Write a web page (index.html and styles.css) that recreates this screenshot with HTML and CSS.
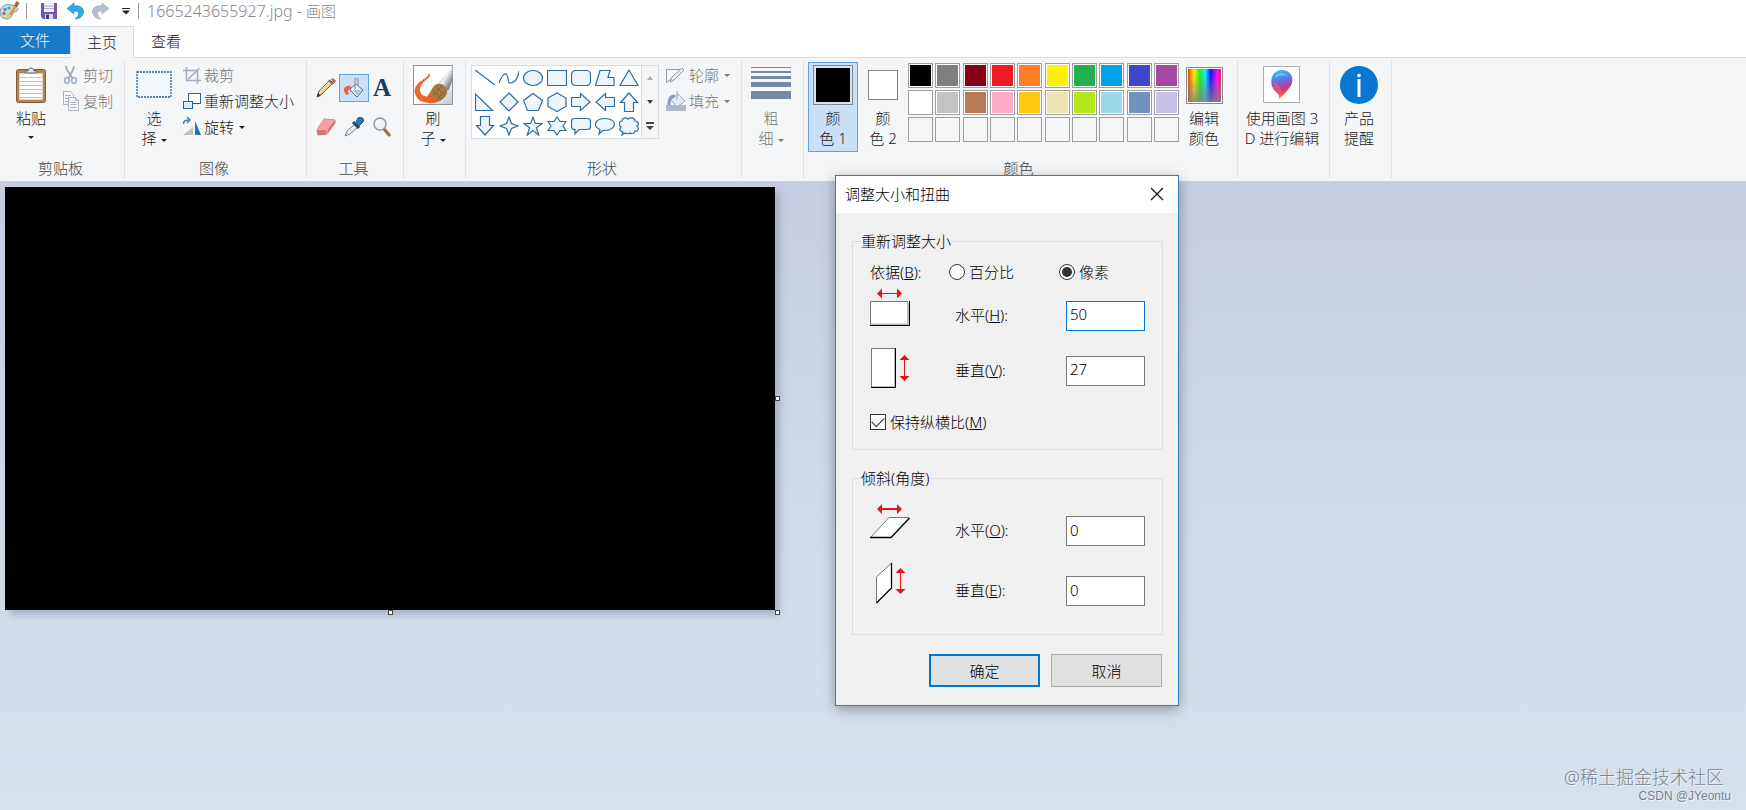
FILE: index.html
```html
<!DOCTYPE html>
<html lang="zh-CN">
<head>
<meta charset="utf-8">
<title>1665243655927.jpg - 画图</title>
<link rel="stylesheet" href="styles.css">
</head>
<body>
<header class="titlebar">
  <svg class="app-icon" width="20" height="20" viewBox="0 0 20 20"><path d="M0 12C0 6 5 2 11 4c6 1 8 4 6 6-1 1-3 0-4 2-1 3-2 6-6 6-4 0-7-3-7-6z" fill="#c6dbe2" stroke="#7896a3"/><circle cx="5" cy="8.500" r="1.700" fill="#3f9be0"/><circle cx="9" cy="7" r="1.600" fill="#58b25c"/><circle cx="4" cy="12.500" r="1.700" fill="#e0574a"/><circle cx="8" cy="15" r="1.600" fill="#eec23a"/><path d="M10 14L17 3" stroke="#e09a3c" stroke-width="2.600"/><path d="M15.500 5.500L18 1" stroke="#a8672a" stroke-width="3.600"/></svg>
  <span class="divider"></span>
  <button class="quick" aria-label="保存"><svg width="18" height="18" viewBox="0 0 18 18"><path d="M1 1h16v16H3l-2-2z" fill="#7657ab"/><path d="M4 1h10v9H4z" fill="#eef1f6"/><path d="M4 4h10M4 6.500h10" stroke="#aab6c8"/><path d="M5 12h8v5H5z" fill="#d9d5ea"/><path d="M6 12.500h3V17H6z" fill="#4c3a80"/></svg></button>
  <button class="quick" aria-label="撤消"><svg width="18" height="18" viewBox="0 0 18 18"><path d="M1 6.500L8 1v3c8-1 11 4 9 8-1 3-4 5-8 5 4-3 6-8-1-8v3z" fill="#36a6e4" stroke="#2490d0" stroke-width=".7"/></svg></button>
  <button class="quick" aria-label="重做"><svg width="18" height="18" viewBox="0 0 18 18"><path d="M17 6.500L10 1v3C2 3-1 8 1 12c1 3 4 5 8 5-4-3-6-8 1-8v3z" fill="#b4bfcd" stroke="#a3afbf" stroke-width=".7"/></svg></button>
  <button class="quick quick-more" aria-label="自定义快速访问工具栏"><svg width="8" height="8" viewBox="0 0 8 8"><path d="M0 1.500h8" stroke="#222" /><path d="M0 3.500h8L4 7.500z" fill="#222"/></svg></button>
  <span class="divider"></span>
  <h1 class="doc-title">1665243655927.jpg - <span class="app-name">画图</span></h1>
</header>

<nav class="tabs">
  <button class="tab tab-file">文件</button>
  <button class="tab tab-active">主页</button>
  <button class="tab">查看</button>
</nav>

<section class="ribbon">
  <div class="group">
    <div class="group-body">
      <button class="big wide-paste"><span class="big-icon"><svg width="32" height="38" viewBox="0 0 32 38"><rect x="1.500" y="3.500" width="29" height="33" rx="2" fill="#b78850" stroke="#7d5a34"/><path d="M4 7h24v27H4z" fill="#fff" stroke="#96754e" stroke-width=".6"/><path d="M5 11.500h22M5 15.500h22M5 19.500h22M5 23.500h22M5 27.500h22M5 31.500h22" stroke="#b9c6d4"/><path d="M10 7V5h3c0-4 6-4 6 0h3v2z" fill="#dfe5e8" stroke="#5e6870"/></svg></span><span>粘贴</span><span class="caret"></span></button>
      <div class="stack">
        <button class="small" disabled><svg width="18" height="20" viewBox="0 0 18 20"><path d="M4 1l1 4 6 9M12 1l-1 4-5 9" fill="none" stroke="#a2a9b5" stroke-width="1.800"/><ellipse cx="5" cy="15.500" rx="2.300" ry="2.800" fill="none" stroke="#a5b3cb" stroke-width="1.800"/><ellipse cx="12" cy="15.500" rx="2.300" ry="2.800" fill="none" stroke="#a5b3cb" stroke-width="1.800"/></svg>剪切</button>
        <button class="small" disabled><svg width="18" height="20" viewBox="0 0 18 20"><path d="M1.500.5h7l3 3v10h-10z" fill="#f5f7fb" stroke="#a7b3c9"/><path d="M3 4.500h6M3 7.500h6M3 10.500h6" stroke="#a7b3c9"/><path d="M6.500 6.500h7l3 3v10h-10z" fill="#f5f7fb" stroke="#a7b3c9"/><path d="M13.500 6.500v3h3M8.500 11.500h6M8.500 13.500h6M8.500 16.500h6" fill="none" stroke="#a7b3c9"/></svg>复制</button>
      </div>
    </div>
    <h2 class="group-label">剪贴板</h2>
  </div>

  <div class="group">
    <div class="group-body">
      <button class="big"><span class="big-icon"><svg width="36" height="28" viewBox="0 0 36 28"><rect x="1" y="1" width="34" height="25" fill="#f3f8fc" stroke="#265f94" stroke-width="1.300" stroke-dasharray="2 1"/></svg></span><span>选<br>择<span class="caret"></span></span></button>
      <div class="stack stack-image">
        <button class="small" disabled><svg width="18" height="18" viewBox="0 0 18 18"><path d="M3.500 1v13.500H18M0 4.500h14.500V18M5 13.500L16.500 2" fill="none" stroke="#a3adc2" stroke-width="1.500"/></svg>裁剪</button>
        <button class="small"><svg width="18" height="18" viewBox="0 0 18 18"><rect x="5.500" y="1.500" width="12" height="10" fill="#fff" stroke="#22659c"/><rect x=".5" y="9.500" width="9" height="7" fill="#d7edf8" stroke="#22659c"/></svg>重新调整大小</button>
        <button class="small"><svg width="18" height="20" viewBox="0 0 18 20"><path d="M0 18h10V10z" fill="#bdc0c3"/><path d="M12 4v14h6z" fill="#2373b3"/><path d="M.5 7c0-2 1-4 5-4M4 0l3 3-3 3" fill="none" stroke="#2f7fc8" stroke-width="1.500"/></svg>旋转<span class="caret"></span></button>
      </div>
    </div>
    <h2 class="group-label">图像</h2>
  </div>

  <div class="group">
    <div class="group-body tools">
      <button class="tool" aria-label="铅笔"><svg width="20" height="20" viewBox="0 0 20 20"><path d="M1 19l2-6L14 2l3 3L6 16z" fill="#f6d27b" stroke="#7c5f33"/><path d="M4 13L14 3" stroke="#fff2bb"/><path d="M15 1l2-1 3 3-2 3z" fill="#c95f54"/><path d="M13 2l4 4" stroke="#557a68" stroke-width="1.800"/><path d="M1 19l1-4 3 3z" fill="#333"/></svg></button>
      <button class="tool tool-selected" aria-label="用颜色填充"><svg width="20" height="20" viewBox="0 0 20 20"><path d="M7 10l5-4 7 6-6 7-7-7z" fill="#e9f3f9" stroke="#50697d"/><path d="M9 12l9-.500-5 6z" fill="#a5c8e2"/><path d="M11 11V2c0-3 3-3 3 0v6" fill="none" stroke="#96938a" stroke-width="1.200"/><path d="M7 8C2 7-1 10 0 13l2 4 3-1c-2-3-1-4 1-5z" fill="#ed6535"/></svg></button>
      <button class="tool letter" aria-label="文本">A</button>
      <button class="tool" aria-label="橡皮擦"><svg width="20" height="20" viewBox="0 0 20 20"><path d="M1 13L8 2l11 1v3l-8 11-9 1z" fill="#dd7377" stroke="#c6777a"/><path d="M1 13L8 2l11 1-8 10z" fill="#f3a2a1"/><path d="M11 12v5" stroke="#f4b6b3"/></svg></button>
      <button class="tool" aria-label="颜色选取器"><svg width="20" height="20" viewBox="0 0 20 20"><path d="M1 19l2-5 8-7 3 3-8 7z" fill="#e6edf2" stroke="#718493"/><path d="M9 5l6 6" stroke="#25435d" stroke-width="3"/><path d="M12 5l2-4c3-2 7 1 5 4l-4 4z" fill="#2c79b8" stroke="#1b4d7b"/></svg></button>
      <button class="tool" aria-label="放大镜"><svg width="20" height="20" viewBox="0 0 20 20"><path d="M12 12l6 7" stroke="#9f6d3c" stroke-width="3"/><circle cx="8" cy="7" r="6" fill="#edf5f9" stroke="#90999e" stroke-width="1.500"/><path d="M5 7c0-2 1-3 3-3" fill="none" stroke="#fff" stroke-width="1.500"/></svg></button>
    </div>
    <h2 class="group-label">工具</h2>
  </div>

  <div class="group">
    <div class="group-body">
      <button class="big"><span class="big-icon"><svg width="40" height="40" viewBox="0 0 40 40"><defs><linearGradient id="paper" x1="0" y1="0" x2="1" y2="1"><stop offset=".5" stop-color="#fff"/><stop offset="1" stop-color="#c4c8cb"/></linearGradient><linearGradient id="ferrule" x1="0" y1="0" x2="1" y2="1"><stop offset="0" stop-color="#70767e"/><stop offset=".45" stop-color="#f2f4f6"/><stop offset="1" stop-color="#30343f"/></linearGradient></defs><rect x=".5" y=".5" width="39" height="39" fill="url(#paper)" stroke="#8f9496"/><path d="M16 8c-1 4-4 5-8 8-6 4-8 10-5 15 3 6 9 7 15 6l3-6c-7 2-14 0-14-6 0-4 3-8 7-11 3-2 4-4 2-6z" fill="#ee6730"/><path d="M10 36c4-2 5-7 9-11l9 10c-5 4-13 4-18 1z" fill="#e9612a"/><path d="M18 26c2-6 7-9 11-7 4 1 6 6 5 10-3 5-7 8-10 7-4-2-6-6-6-10z" fill="#a47b43"/><path d="M20 25l9 9M23 22l9 9M20 30l9-9M24 34l9-9" stroke="#7a5730" stroke-width=".8"/><path d="M26 18L38 2h1.500v13L35 26c-2-4-5-7-9-8z" fill="url(#ferrule)"/></svg></span><span>刷<br>子<span class="caret"></span></span></button>
    </div>
  </div>

  <div class="group">
    <div class="group-body">
      <div class="gallery">
        <div class="shapes">
          <button class="shape" aria-label="直线"><svg viewBox="0 0 20 20"><path d="M0 2l20 15"/></svg></button>
          <button class="shape" aria-label="曲线"><svg viewBox="0 0 20 20"><path d="M0 15C3 7 6 4 8 7s0 9 4 8 7-5 8-12"/></svg></button>
          <button class="shape" aria-label="椭圆形"><svg viewBox="0 0 20 20"><ellipse cx="10" cy="10" rx="9.500" ry="7.500"/></svg></button>
          <button class="shape" aria-label="矩形"><svg viewBox="0 0 20 20"><path d="M.5 2.500h19v15H.5z"/></svg></button>
          <button class="shape" aria-label="圆角矩形"><svg viewBox="0 0 20 20"><rect x=".5" y="2.500" width="19" height="15" rx="4"/></svg></button>
          <button class="shape" aria-label="多边形"><svg viewBox="0 0 20 20"><path d="M5 2.500h10l-2 7h6v8H.5z"/></svg></button>
          <button class="shape" aria-label="三角形"><svg viewBox="0 0 20 20"><path d="M10 2l9 15.500H1z"/></svg></button>
          <button class="shape" aria-label="直角三角形"><svg viewBox="0 0 20 20"><path d="M.5 2v16.500h17z"/></svg></button>
          <button class="shape" aria-label="菱形"><svg viewBox="0 0 20 20"><path d="M10 1l9 9-9 9-9-9z"/></svg></button>
          <button class="shape" aria-label="五边形"><svg viewBox="0 0 20 20"><path d="M10 1.500l9.500 7-4 10h-11l-4-10z"/></svg></button>
          <button class="shape" aria-label="六边形"><svg viewBox="0 0 20 20"><path d="M10 1l9 5v8.500l-9 5-9-5V6z"/></svg></button>
          <button class="shape" aria-label="右箭头"><svg viewBox="0 0 20 20"><path d="M.5 5.500h9v-4L19 10l-9.500 8.500v-4h-9z"/></svg></button>
          <button class="shape" aria-label="左箭头"><svg viewBox="0 0 20 20"><path d="M19.500 5.500h-9v-4L1 10l9.500 8.500v-4h9z"/></svg></button>
          <button class="shape" aria-label="上箭头"><svg viewBox="0 0 20 20"><path d="M5.500 19.500v-9h-4L10 1l8.500 9.500h-4v9z"/></svg></button>
          <button class="shape" aria-label="下箭头"><svg viewBox="0 0 20 20"><path d="M5.500.5v9h-4L10 19l8.500-9.500h-4v-9z"/></svg></button>
          <button class="shape" aria-label="四角星形"><svg viewBox="0 0 20 20"><path d="M10 1l2.500 6.500L19 10l-6.500 2.500L10 19l-2.500-6.500L1 10l6.500-2.500z"/></svg></button>
          <button class="shape" aria-label="五角星形"><svg viewBox="0 0 20 20"><path d="M10 1l2.300 6.500H19l-5.500 4.300 2.200 7.200L10 14.500 4.300 19l2.200-7.200L1 7.500h6.700z"/></svg></button>
          <button class="shape" aria-label="六角星形"><svg viewBox="0 0 20 20"><path d="M10 1l3 4.500h6L16 10l3 4.500h-6L10 19l-3-4.500H1L4 10 1 5.500h6z"/></svg></button>
          <button class="shape" aria-label="圆角矩形标注"><svg viewBox="0 0 20 20"><path d="M3.500 2.500h13q3 0 3 3v5q0 3-3 3H8L4 18v-4.500q-3.500 0-3.500-3v-5q0-3 3-3z"/></svg></button>
          <button class="shape" aria-label="椭圆形标注"><svg viewBox="0 0 20 20"><path d="M5 13.500C-3 10 0 2.500 10 2.500c13 0 12 12 0 12H8L4 18z"/></svg></button>
          <button class="shape" aria-label="云形标注"><svg viewBox="0 0 20 20"><path d="M3 5c0-3 4-4 6-2 3-2 7-1 7 2 4 0 4 4 2 5 3 3 0 6-2 5 0 3-4 3-5 2-1 1-4 1-5 0l-3 2 1-3c-3 0-4-3-2-5-3-2-2-6 1-6z"/></svg></button>
        </div>
        <div class="gallery-scroll">
          <button aria-label="向上滚动"><svg width="8" height="6" viewBox="0 0 8 6"><path d="M1 5l3-4 3 4z" fill="#aaa"/></svg></button>
          <button aria-label="向下滚动"><svg width="8" height="6" viewBox="0 0 8 6"><path d="M1 1h6L4 5z" fill="#444"/></svg></button>
          <button aria-label="更多形状"><svg width="8" height="9" viewBox="0 0 8 9"><path d="M0 1h8" stroke="#444" stroke-width="2"/><path d="M0 4h8L4 8z" fill="#444"/></svg></button>
        </div>
      </div>
      <div class="stack stack-style">
        <button class="small" disabled><svg width="20" height="18" viewBox="0 0 20 18"><path d="M14 3.500H.5v13L12 8" fill="none" stroke="#8e99b8"/><path d="M4 16l2-5L16 2l2 2L8 14z" fill="#e8eef7" stroke="#8e99b8"/></svg>轮廓<span class="caret"></span></button>
        <button class="small" disabled><svg width="20" height="20" viewBox="0 0 20 20"><path d="M0 14h20v6H0z" fill="#aeb8ca"/><path d="M3 14c0-6 1-9 6-9" fill="none" stroke="#8e9bb5" stroke-width="3"/><path d="M5 9l7-6 7 7-8 6z" fill="#e2ebf4" stroke="#9ba8bf"/><path d="M11 9V0" stroke="#9ba8bf"/></svg>填充<span class="caret"></span></button>
      </div>
    </div>
    <h2 class="group-label">形状</h2>
  </div>

  <div class="group">
    <div class="group-body">
      <button class="big" disabled><span class="big-icon"><svg width="40" height="36" viewBox="0 0 40 36"><path d="M0 0h40v1H0zM0 4h40v2H0zM0 9h40v3H0zM0 15h40v5H0zM0 24h40v8H0z" fill="#7588a5"/></svg></span><span>粗<br>细<span class="caret"></span></span></button>
    </div>
  </div>

  <div class="group group-colors">
    <div class="group-body">
      <button class="big big-selected"><span class="big-icon"><span class="current current-one"></span></span><span>颜<br>色 1</span></button>
      <button class="big"><span class="big-icon"><span class="current current-two"></span></span><span>颜<br>色 2</span></button>
      <div class="palette">
        <button class="swatch black" aria-label="黑色"></button><button class="swatch gray" aria-label="灰色-50%"></button><button class="swatch maroon" aria-label="深红色"></button><button class="swatch red" aria-label="红色"></button><button class="swatch orange" aria-label="橙色"></button><button class="swatch yellow" aria-label="黄色"></button><button class="swatch green" aria-label="绿色"></button><button class="swatch turquoise" aria-label="青绿色"></button><button class="swatch indigo" aria-label="靛蓝色"></button><button class="swatch purple" aria-label="紫色"></button>
        <button class="swatch white" aria-label="白色"></button><button class="swatch silver" aria-label="灰色-25%"></button><button class="swatch brown" aria-label="褐色"></button><button class="swatch rose" aria-label="玫瑰色"></button><button class="swatch gold" aria-label="金色"></button><button class="swatch cream" aria-label="浅黄色"></button><button class="swatch lime" aria-label="酸橙色"></button><button class="swatch sky" aria-label="淡青绿色"></button><button class="swatch steel" aria-label="蓝灰色"></button><button class="swatch lavender" aria-label="淡紫色"></button>
        <button class="swatch" aria-label="自定义 1"></button><button class="swatch" aria-label="自定义 2"></button><button class="swatch" aria-label="自定义 3"></button><button class="swatch" aria-label="自定义 4"></button><button class="swatch" aria-label="自定义 5"></button><button class="swatch" aria-label="自定义 6"></button><button class="swatch" aria-label="自定义 7"></button><button class="swatch" aria-label="自定义 8"></button><button class="swatch" aria-label="自定义 9"></button><button class="swatch" aria-label="自定义 10"></button>
      </div>
      <button class="big"><span class="big-icon"><span class="spectrum"></span></span><span>编辑<br>颜色</span></button>
    </div>
    <h2 class="group-label">颜色</h2>
  </div>

  <div class="group">
    <div class="group-body">
      <button class="big big-wide"><span class="big-icon"><svg width="38" height="38" viewBox="0 0 38 38"><defs><linearGradient id="pin" x1=".2" y1="0" x2=".4" y2="1"><stop offset="0" stop-color="#35c8f4"/><stop offset=".35" stop-color="#5a79e8"/><stop offset=".6" stop-color="#b0409f"/><stop offset=".8" stop-color="#f0453f"/><stop offset="1" stop-color="#ffc22c"/></linearGradient></defs><path d="M.5.500h36v36H.5z" fill="#fff" stroke="#a7abae"/><path d="M15 34c3-5 0-6-3-9C5 18 8 4 19 4c10 0 13 10 8 17-3 4-7 9-12 13z" fill="url(#pin)"/><path d="M12 12c2-6 10-6 13-1-4-3-9-2-13 1z" fill="#6edff8" opacity=".7"/><path d="M11 16c3 1 8 5 7 13l-2 3c1-4-3-6-5-10z" fill="#f05a76" opacity=".7"/></svg></span><span>使用画图 3<br>D 进行编辑</span></button>
    </div>
  </div>

  <div class="group">
    <div class="group-body">
      <button class="big"><span class="big-icon"><svg width="38" height="38" viewBox="0 0 38 38"><circle cx="19" cy="19" r="19" fill="#0877d1"/><circle cx="19" cy="9.500" r="1.800" fill="#fff"/><path d="M19 13v18" stroke="#fff" stroke-width="3"/></svg></span><span>产品<br>提醒</span></button>
    </div>
  </div>
</section>

<main class="workspace">
  <div class="canvas"><span class="handle handle-right"></span><span class="handle handle-bottom"></span><span class="handle handle-corner"></span></div>
  <div class="watermark"><span class="mark-main">@稀土掘金技术社区</span><span class="mark-sub">CSDN @JYeontu</span></div>
</main>

<form class="dialog" role="dialog" aria-labelledby="dialog-title">
  <div class="dialog-head">
    <h2 id="dialog-title">调整大小和扭曲</h2>
    <button type="button" class="close" aria-label="关闭"><svg width="14" height="14" viewBox="0 0 14 14"><path d="M1 1l12 12M13 1L1 13" stroke="#111" stroke-width="1.200"/></svg></button>
  </div>
  <div class="dialog-body">
    <fieldset class="panel panel-resize">
      <legend>重新调整大小</legend>
      <div class="units">
        <span>依据(<u>B</u>):</span>
        <label class="choice"><input type="radio" name="unit">百分比</label>
        <label class="choice"><input type="radio" name="unit" checked>像素</label>
      </div>
      <div class="field">
        <svg width="40" height="55" viewBox="0 0 40 55"><path d="M9 5.500h21" stroke="#e51414"/><path d="M7 5.500l5-5v10zM32 5.500l-5-5v10z" fill="#e51414"/><path d="M0 13h40v25H0z" fill="#fff"/><path d="M.5 37V13.500H38" fill="none" stroke="#777"/><path d="M38 14v22.500H1" fill="none" stroke="#bbb" stroke-width="2"/><path d="M0 37.500h39.500V13" fill="none" stroke="#000"/></svg>
        <label for="width">水平(<u>H</u>):</label><input class="entry entry-focus" id="width" type="text" value="50">
      </div>
      <div class="field">
        <svg width="40" height="55" viewBox="0 0 40 55"><path d="M34.500 14v22" stroke="#e51414"/><path d="M34.500 12l5 5h-10zM34.500 38l5-5h-10z" fill="#e51414"/><path d="M1 5h25v40H1z" fill="#fff"/><path d="M1.500 44V5.500H25" fill="none" stroke="#777"/><path d="M2 43.500h22.500V6" fill="none" stroke="#bbb"/><path d="M1 44.500h24.500V5" fill="none" stroke="#000"/></svg>
        <label for="height">垂直(<u>V</u>):</label><input class="entry" id="height" type="text" value="27">
      </div>
      <label class="choice ratio"><input type="checkbox" checked><span>保持纵横比(<u>M</u>)</span></label>
    </fieldset>
    <fieldset class="panel panel-skew">
      <legend>倾斜(角度)</legend>
      <div class="field">
        <svg width="40" height="60" viewBox="0 0 40 60"><path d="M9 8h21" stroke="#e51414" stroke-width="2"/><path d="M7 8l5-5v10zM32 8l-5-5v10z" fill="#e51414"/><path d="M1 36L19 16.500h20L22 36z" fill="#fff"/><path d="M1 36L19 16.500h20" fill="none" stroke="#777"/><path d="M0 36.500h21L39.500 17" fill="none" stroke="#000" stroke-width="1.300"/></svg>
        <label for="skew-x">水平(<u>O</u>):</label><input class="entry" id="skew-x" type="text" value="0">
      </div>
      <div class="field">
        <svg width="40" height="60" viewBox="0 0 40 60"><path d="M30.500 9v22" stroke="#e51414"/><path d="M30.500 7l5 5h-10zM30.500 33l5-5h-10z" fill="#e51414"/><path d="M6.500 42V16L21.500 2v26z" fill="#fff"/><path d="M6.500 42V16L21.500 2" fill="none" stroke="#777"/><path d="M6.500 42L21.500 27V2" fill="none" stroke="#000" stroke-width="1.300"/></svg>
        <label for="skew-y">垂直(<u>E</u>):</label><input class="entry" id="skew-y" type="text" value="0">
      </div>
    </fieldset>
    <div class="actions"><button type="button" class="action action-default">确定</button><button type="button" class="action">取消</button></div>
  </div>
</form>
</body>
</html>
```

FILE: styles.css
```css
* { box-sizing: border-box; }

body {
  position: relative;
  display: flex;
  flex-direction: column;
  min-height: 100vh;
  margin: 0;
  overflow: hidden;
  background: #fff;
  color: #222;
  font: 300 15px/20px "Noto Sans", "Noto Sans CJK SC", sans-serif;
}

h1, h2 { margin: 0; font: inherit; }
button, input { margin: 0; color: inherit; font: inherit; }
button { padding: 0; border: 0; background: none; }
svg { display: block; flex: none; }

/* Title bar */
.titlebar { display: flex; align-items: center; height: 26px; padding-bottom: 4px; }
.app-icon { margin-right: 6px; }
.divider { width: 1px; height: 16px; background: #999; }
.quick { display: grid; place-items: center; width: 26px; }
.divider + .quick { margin-left: 9px; }
.quick-more { width: 24px; }
.doc-title { margin-left: 8px; color: #888; font-size: 16px; }
.app-name { font-size: 15px; }

/* Tabs */
.tabs { display: flex; height: 32px; border-bottom: 1px solid #dadbdc; }
.tab { height: 31px; padding: 0 17px 2px; }
.tab-file { width: 70px; height: 28px; padding-bottom: 0; background: #1979ca; color: #fff; }
.tab-active {
  height: 32px;
  padding: 0 16px 2px;
  border: 1px solid #dadbdc;
  border-bottom: 0;
  background: #f5f6f7;
}

/* Ribbon */
.ribbon { display: flex; padding: 2px 0 3px; background: #f5f6f7; }
.group {
  display: flex;
  flex-direction: column;
  justify-content: space-between;
  height: 118px;
  padding: 0 7px 0 4px;
  border-right: 1px solid #e2e3e4;
}
.group-body { display: flex; padding-top: 2px; }
.group-label { color: #444; text-align: center; }
.group-colors { padding-right: 8px; }

.caret {
  display: inline-block;
  margin-left: 4px;
  border: 3px solid transparent;
  border-top-color: currentColor;
  border-bottom: 0;
  vertical-align: middle;
}
.big {
  display: flex;
  flex-direction: column;
  align-items: center;
  width: 50px;
  height: 90px;
  padding: 2px 0;
  border: 1px solid transparent;
}
.big > .caret { margin: 8px 0 0; }
.big-icon { display: grid; place-items: center; width: 40px; height: 40px; margin-bottom: 3px; }
.big-wide { width: 80px; }
.wide-paste { width: 54px; }
.big-selected { border-color: #62a2e4; background: #c9e0f7; }
.stack { display: flex; flex-direction: column; }
.stack-style { padding-left: 3px; }
.stack-image { padding-right: 1px; }
.small { display: flex; align-items: center; gap: 3px; height: 26px; padding: 0 4px; white-space: nowrap; }
.small .caret { margin-left: 2px; }
button:disabled { color: #777; }

.tools {
  display: grid;
  grid-template-columns: repeat(3, 28px);
  gap: 13px 0;
  padding: 15px 0 0 1px;
}
.tool { display: grid; place-items: center; height: 26px; }
.tool-selected { outline: 1px solid #62a2e4; background: #c9e0f7; }
.letter { color: #1c3a63; font: bold 25px/26px "Liberation Serif", serif; }

.gallery { display: flex; height: 74px; margin: 3px 0 0 1px; border: 1px solid #dadbdc; }
.shapes { display: grid; grid-template-columns: repeat(7, 24px); grid-template-rows: repeat(3, 24px); padding-left: 1px; background: #fff; }
.shape { display: grid; place-items: center; }
.shape svg { width: 20px; height: 20px; fill: #eef6fb; stroke: #2b6ca3; stroke-width: 1.2; }
.shape:nth-child(-n+2) svg { fill: none; }
.gallery-scroll { display: grid; grid-template-rows: repeat(3, 24px); width: 17px; border-left: 1px solid #dadbdc; }
.gallery-scroll button { display: grid; place-items: center; }

.current { border: 1px solid #858585; background: #fff; }
.current-one { width: 40px; height: 40px; box-shadow: inset 0 0 0 2px #d5e5f2; background: #000; }
.current-two { width: 30px; height: 30px; }
.palette {
  display: grid;
  grid-template-columns: repeat(10, 25px);
  grid-auto-rows: 25px;
  justify-content: space-between;
  row-gap: 2px;
  width: 271px;
  padding-top: 1px;
}
.swatch { border: 1px solid #a0a0a0; }
.swatch:nth-child(-n+20) { padding: 1px; border: 1px solid #a0a0a0; background-clip: content-box; box-shadow: inset 0 0 0 1px #fff; }
.black { background-color: #000; }
.gray { background-color: #7f7f7f; }
.maroon { background-color: #880015; }
.red { background-color: #ed1c24; }
.orange { background-color: #ff7f27; }
.yellow { background-color: #fff200; }
.green { background-color: #22b14c; }
.turquoise { background-color: #00a2e8; }
.indigo { background-color: #3f48cc; }
.purple { background-color: #a349a4; }
.white { background-color: #fff; }
.silver { background-color: #c3c3c3; }
.brown { background-color: #b97a57; }
.rose { background-color: #ffaec9; }
.gold { background-color: #ffc90e; }
.cream { background-color: #efe4b0; }
.lime { background-color: #b5e61d; }
.sky { background-color: #99d9ea; }
.steel { background-color: #7092be; }
.lavender { background-color: #c8bfe7; }
.spectrum {
  width: 37px;
  height: 37px;
  border: 1px solid #8b8b8b;
  outline: 1px solid #fff;
  outline-offset: -2px;
  background:
    linear-gradient(rgba(128, 128, 128, 0) 20%, rgba(128, 128, 128, .85)),
    linear-gradient(90deg, #e22, #fe0 20%, #1e2 38%, #1ef 52%, #11f 68%, #f1e 86%, #f14);
}

/* Drawing area */
.workspace { position: relative; flex: 1; padding: 6px 5px; background: linear-gradient(#c6cee0, #cfd9e7 50%, #d7e1ec); }
.canvas { position: relative; width: 770px; height: 423px; background: #000; box-shadow: 5px 5px 7px rgba(125, 140, 175, .5); }
.handle { position: absolute; width: 5px; height: 5px; border: 1px solid #444; background: #fff; }
.handle-right { top: 209px; right: -5px; }
.handle-bottom { bottom: -5px; left: 383px; }
.handle-corner { right: -5px; bottom: -5px; }

.watermark {
  position: absolute;
  right: 15px;
  bottom: 6px;
  display: flex;
  flex-direction: column;
  align-items: flex-end;
  color: #7c8492;
  text-shadow: 1px 1px 0 #f1f4f8;
}
.mark-main { margin-right: 7px; font-size: 18px; line-height: 22px; }
.mark-sub { color: #777f8c; font: 12px/16px "Liberation Sans", sans-serif; }

/* Dialog */
.dialog {
  position: absolute;
  top: 175px;
  left: 835px;
  width: 344px;
  border: 1px solid #2a82c4;
  background: #f0f0f0;
  box-shadow: 0 3px 12px rgba(0, 0, 0, .35);
  color: #000;
}
.dialog-head { display: flex; align-items: center; justify-content: space-between; height: 37px; padding: 0 14px 1px 9px; background: #fff; }
.dialog-body { padding: 18px 15px 18px 16px; }
.panel { margin: 0 0 18px; padding: 0 17px; border: 1px solid #dcdcdc; }
.panel legend { margin-left: -10px; padding: 0 1px; }
.panel-resize { padding-top: 11px; padding-bottom: 17px; }
.panel-skew { margin-bottom: 19px; padding-top: 13px; padding-bottom: 13px; }
.units { display: grid; grid-template-columns: 79px 110px 1fr; margin-bottom: 6px; white-space: nowrap; }
.choice { display: flex; align-items: center; gap: 4px; }
.choice input { appearance: none; display: grid; place-items: center; width: 16px; height: 16px; border: 1px solid #333; background: #fff; }
.choice input[type="radio"] { border-radius: 50%; }
.choice input[type="radio"]:checked::before { content: ""; width: 10px; height: 10px; border-radius: 50%; background: #333; }
.choice input[type="checkbox"]:checked::before { content: ""; width: 11px; height: 6px; margin-bottom: 3px; border: solid #333; border-width: 0 0 1px 1px; transform: rotate(-45deg); }
.ratio { margin-top: 14px; }
.field { display: grid; grid-template-columns: 85px 111px 79px; align-items: center; }
.field label { padding-bottom: 2px; }
.entry { width: 100%; height: 30px; padding: 0 3px 3px; border: 1px solid #7a7a7a; background: #fff; outline: 0; }
.entry-focus { border-color: #0078d7; }
.actions { display: flex; justify-content: flex-end; gap: 11px; padding-right: 1px; }
.action { width: 111px; height: 33px; border: 1px solid #adadad; background: #e1e1e1; }
.action-default { border: 2px solid #0078d7; }
```
